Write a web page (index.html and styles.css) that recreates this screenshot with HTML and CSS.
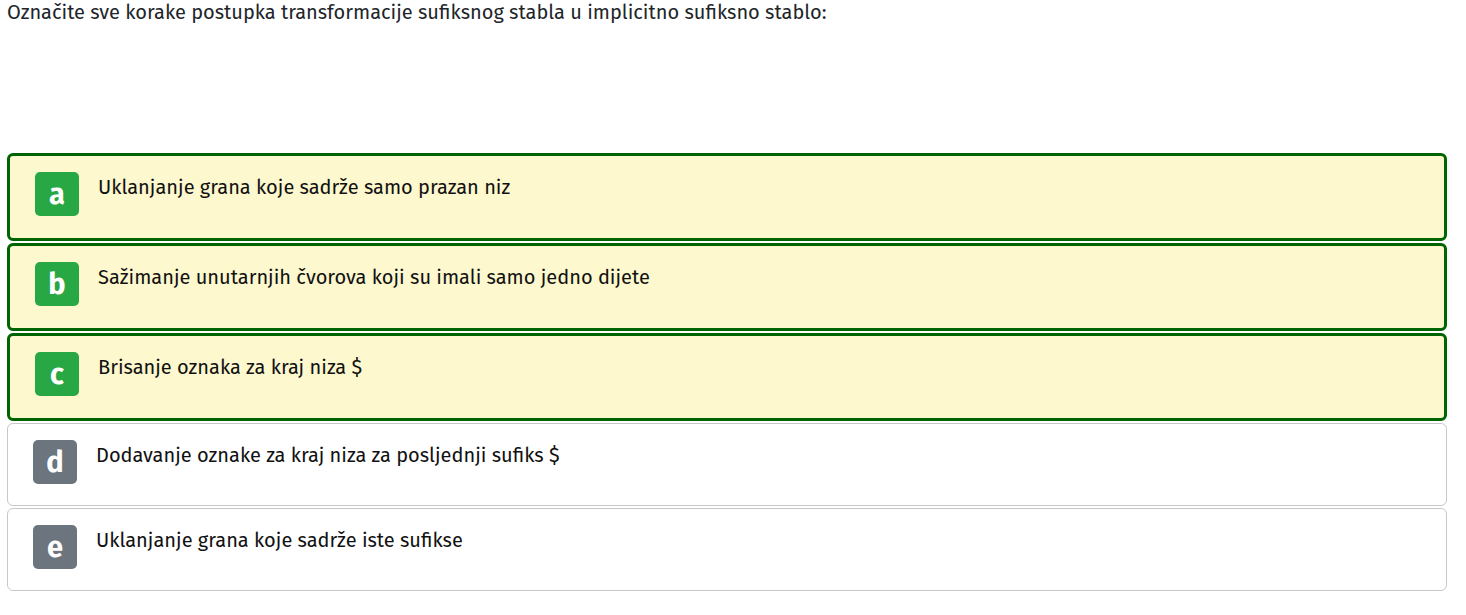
FILE: index.html
```html
<!DOCTYPE html>
<html lang="hr">
<head>
<meta charset="utf-8">
<title>Pitanje</title>
<link rel="stylesheet" href="styles.css">
</head>
<body>
<div class="page">
  <p class="prompt">Označite sve korake postupka transformacije sufiksnog stabla u implicitno sufiksno stablo:</p>
  <div class="options">
    <div class="option selected">
      <span class="badge">a</span>
      <span class="label">Uklanjanje grana koje sadrže samo prazan niz</span>
    </div>
    <div class="option selected">
      <span class="badge">b</span>
      <span class="label">Sažimanje unutarnjih čvorova koji su imali samo jedno dijete</span>
    </div>
    <div class="option selected">
      <span class="badge">c</span>
      <span class="label">Brisanje oznaka za kraj niza $</span>
    </div>
    <div class="option">
      <span class="badge">d</span>
      <span class="label">Dodavanje oznake za kraj niza za posljednji sufiks $</span>
    </div>
    <div class="option">
      <span class="badge">e</span>
      <span class="label">Uklanjanje grana koje sadrže iste sufikse</span>
    </div>
  </div>
</div>
</body>
</html>
```
FILE: styles.css
```css
html, body {
  margin: 0;
  padding: 0;
  background: #ffffff;
}

body {
  font-family: "Fira Sans", "Noto Sans", "Open Sans", sans-serif;
  color: #212529;
  font-size: 20px;
}

.page {
  padding-left: 7px;
  width: 1440px;
}

.prompt {
  margin: 0;
  line-height: 24px;
  height: 153px;
  color: #212529;
}

.options {
  display: flex;
  flex-direction: column;
  gap: 2px;
}

.option {
  display: flex;
  align-items: flex-start;
  gap: 19px;
  border: 1px solid #c8c8c8;
  border-radius: 6px;
  padding: 16px 25px 21px 25px;
  background: #ffffff;
}

.option.selected {
  border: 3px solid #006400;
  background: #fdf8ce;
  padding-bottom: 22px;
}

.badge {
  flex: 0 0 44px;
  box-sizing: border-box;
  width: 44px;
  height: 44px;
  padding-top: 2px;
  border-radius: 5px;
  background: #6c757d;
  color: #ffffff;
  font-weight: 700;
  font-size: 29px;
  line-height: 42px;
  text-align: center;
}

.option.selected .badge {
  background: #28a745;
}

.label {
  line-height: 30px;
  color: #111111;
}
```
